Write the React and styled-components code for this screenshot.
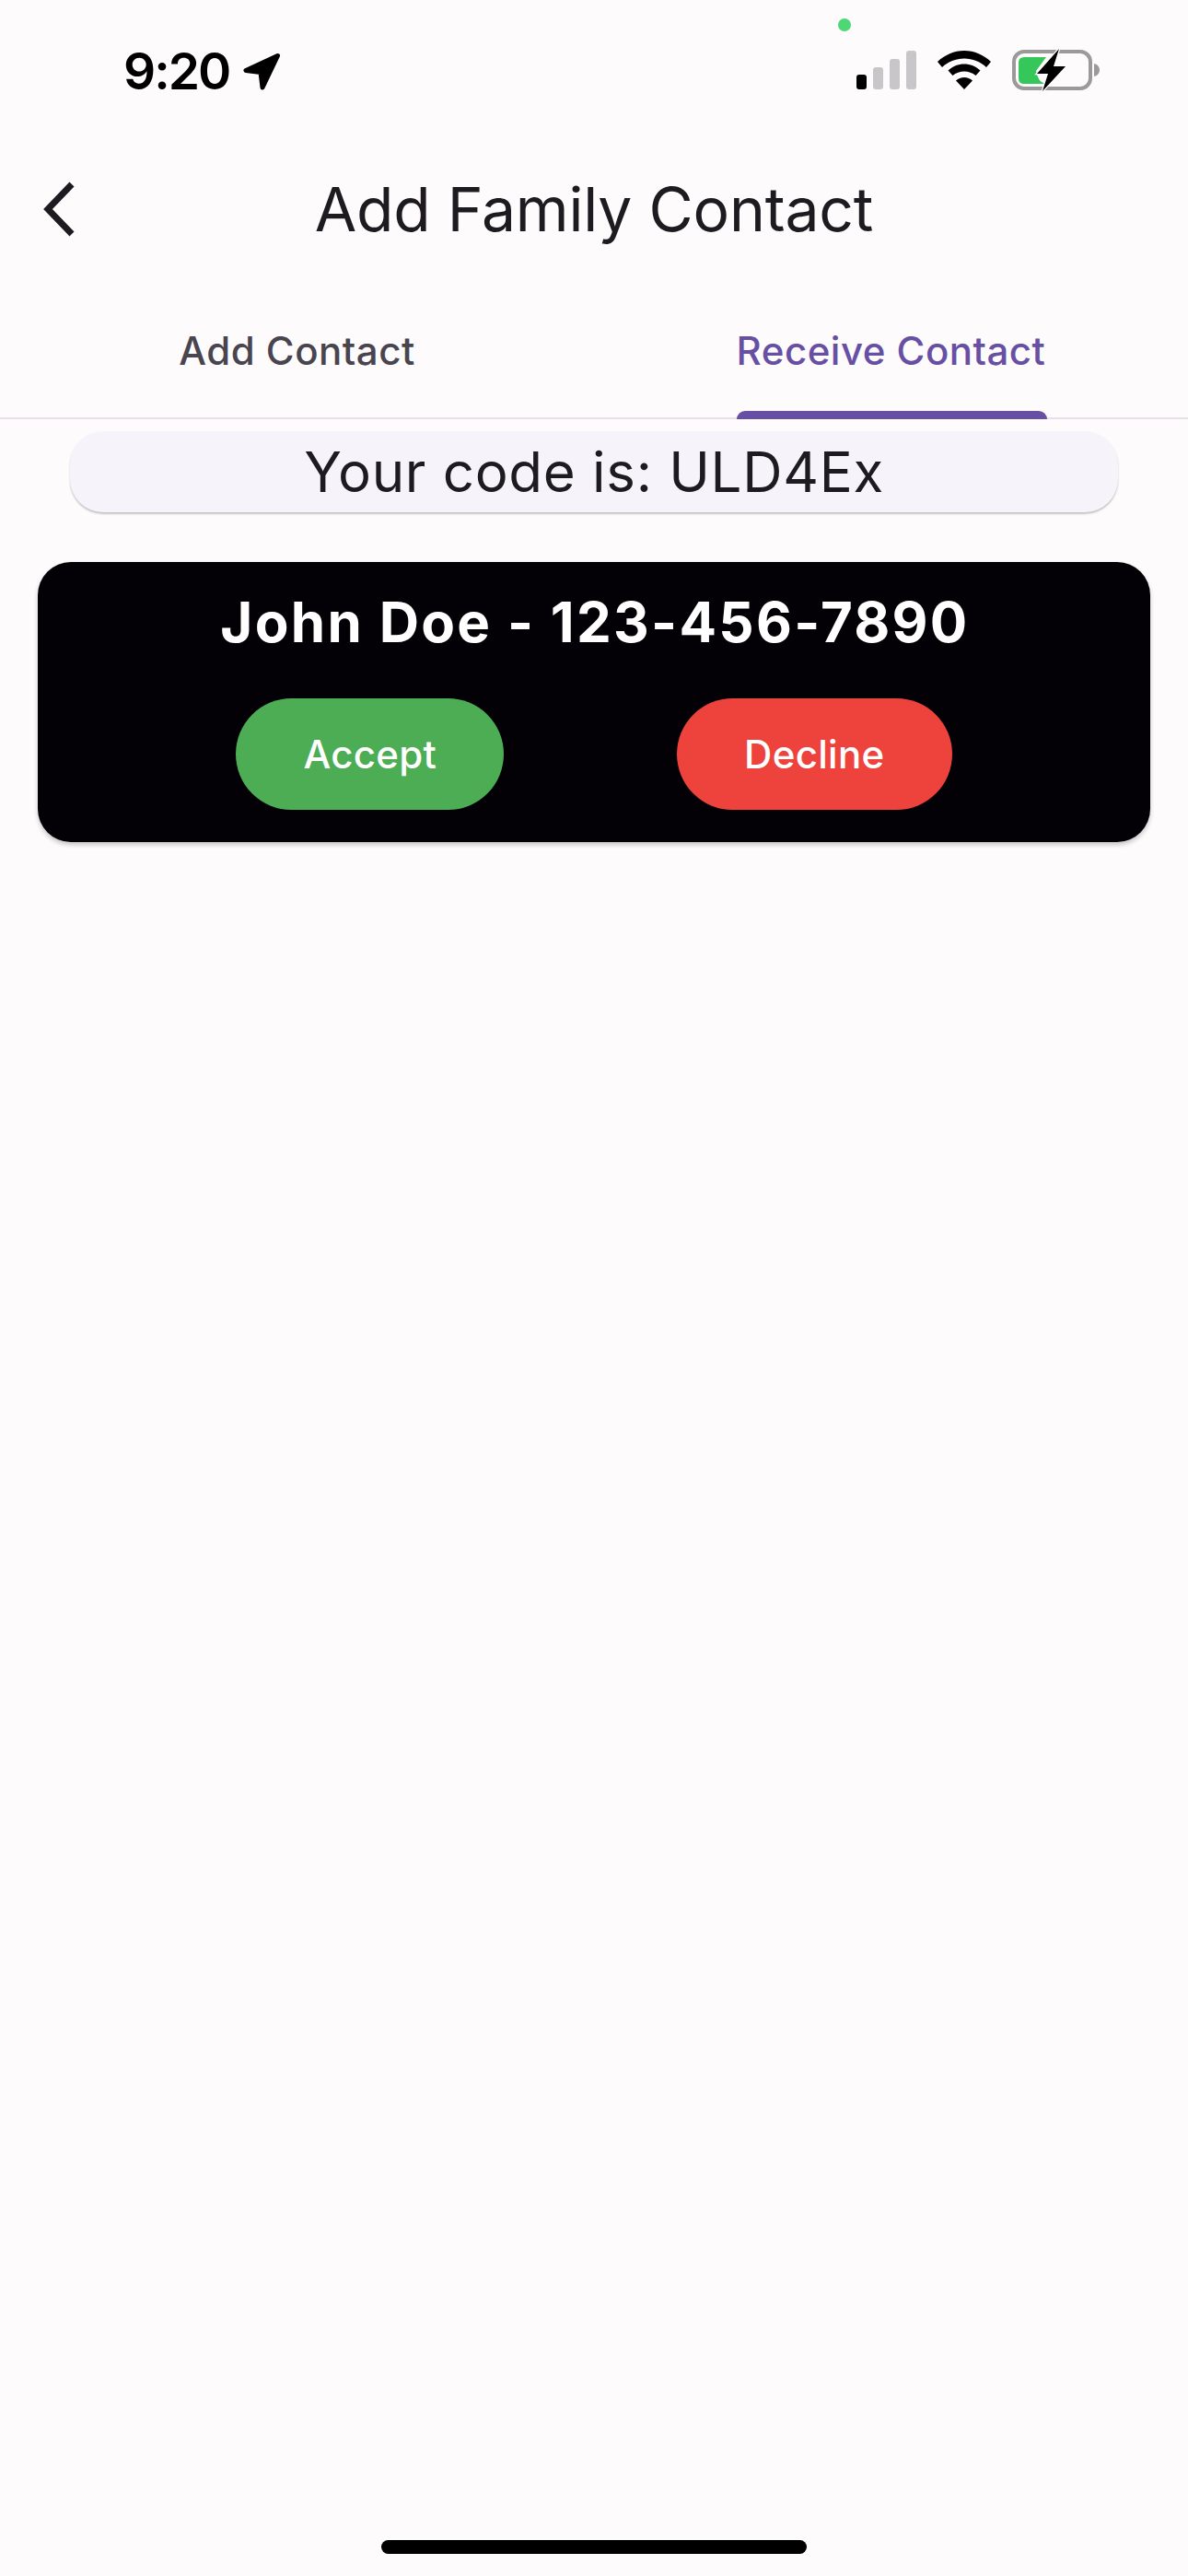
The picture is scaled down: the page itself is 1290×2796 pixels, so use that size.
import React from "react";
import styled, { createGlobalStyle } from "styled-components";

const Global = createGlobalStyle`
  html, body { margin: 0; padding: 0; background: #fefbfc; }
  * { box-sizing: border-box; }
`;

const Page = styled.div`
  width: 1290px;
  height: 2796px;
  display: flex;
  flex-direction: column;
  position: relative;
  overflow: hidden;
  background: #fefbfc;
  font-family: Inter, "Liberation Sans", sans-serif;
  color: #1d1b20;
`;

const StatusBar = styled.div`
  height: 154px;
  flex: none;
  display: flex;
  align-items: center;
  justify-content: space-between;
  padding: 0 95px 0 134px;
`;

const StatusGroup = styled.div`
  display: flex;
  align-items: center;
  gap: ${(p) => p.$gap}px;
  margin-top: ${(p) => p.$lift || 0}px;
`;

const Time = styled.span`
  font-size: 55px;
  font-weight: 600;
  line-height: 1;
  color: #000;
  letter-spacing: -2px;
`;

const CameraDot = styled.span`
  position: absolute;
  left: 910px;
  top: 20px;
  width: 14px;
  height: 14px;
  border-radius: 50%;
  background: #4fd675;
`;

const AppBar = styled.header`
  height: 146px;
  flex: none;
  display: grid;
  grid-template-columns: 1fr auto 1fr;
  align-items: center;
`;

const BackButton = styled.button`
  justify-self: start;
  margin-left: 44px;
  padding: 0;
  border: 0;
  background: none;
  display: flex;
  color: #1d1b20;
`;

const Title = styled.h1`
  margin: 0;
  font-size: 66px;
  font-weight: 400;
  line-height: 1;
  letter-spacing: -0.2px;
`;

const Tabs = styled.nav`
  height: 155px;
  flex: none;
  display: flex;
  border-bottom: 2px solid #e6e0e9;
`;

const Tab = styled.div`
  flex: 1;
  position: relative;
  display: flex;
  justify-content: center;
  align-items: center;
  padding-top: 7px;
  font-size: 42px;
  font-weight: 500;
  letter-spacing: 0.5px;
  color: ${(p) => (p.$active ? "#6750a4" : "#49454f")};
`;

const TabIndicator = styled.span`
  position: absolute;
  left: 155px;
  width: 337px;
  bottom: -2px;
  height: 9px;
  border-radius: 9px 9px 0 0;
  background: #6750a4;
`;

const CodePill = styled.div`
  height: 88px;
  margin: 13px 76px 0;
  flex: none;
  display: flex;
  align-items: center;
  justify-content: center;
  border-radius: 36px;
  background: #f6f3fa;
  box-shadow: 0 2px 2px rgba(0, 0, 0, 0.22);
  font-size: 60px;
  letter-spacing: 0.7px;
`;

const RequestCard = styled.section`
  height: 304px;
  margin: 54px 41px 0;
  flex: none;
  display: flex;
  flex-direction: column;
  align-items: center;
  padding-top: 29px;
  border-radius: 36px;
  background: #030105;
  box-shadow: 0 3px 5px rgba(0, 0, 0, 0.22);
`;

const ContactName = styled.div`
  padding-left: 2px;
  font-size: 60px;
  font-weight: 700;
  line-height: 72px;
  color: #fff;
  letter-spacing: 2.3px;
`;

const Actions = styled.div`
  display: flex;
  justify-content: center;
  gap: 188px;
  margin-top: 47px;
`;

const ActionButton = styled.button`
  height: 121px;
  padding: 0 73px;
  border: 0;
  border-radius: 61px;
  background: ${(p) => p.$color};
  color: #fff;
  font-family: inherit;
  font-size: 42px;
  font-weight: 500;
  letter-spacing: 0.3px;
`;

const HomeIndicator = styled.div`
  width: 462px;
  height: 15px;
  margin: auto auto 24px;
  flex: none;
  border-radius: 8px;
  background: #000;
`;

const LocationArrow = () => (
  <svg width="41" height="41" viewBox="0 0 41 41">
    <path d="M37.500 3.500 L3 19.500 L19 21.500 L21 38 Z" fill="#000" stroke="#000" strokeWidth="5" strokeLinejoin="round" />
  </svg>
);

const Signal = () => (
  <svg width="65" height="42" viewBox="0 0 65 42">
    <rect x="0" y="26" width="11" height="16" rx="3" fill="#000" />
    <rect x="18" y="18" width="11" height="24" rx="3" fill="#c8c6c8" />
    <rect x="36" y="9" width="11" height="33" rx="3" fill="#c8c6c8" />
    <rect x="54" y="0" width="11" height="42" rx="3" fill="#c8c6c8" />
  </svg>
);

const Wifi = () => (
  <svg width="58" height="42" viewBox="0 0 58 42">
    <path d="M29 0 C18 0 8 4.500 0 12 L5 18 C11.500 12 20 8.500 29 8.500 C38 8.500 46.500 12 53 18 L58 12 C50 4.500 40 0 29 0 Z" fill="#000" />
    <path d="M29 14.500 C22.500 14.500 16.500 17 11.500 21.500 L16.500 27 C20 24 24.500 22.500 29 22.500 C33.500 22.500 38 24 41.500 27 L46.500 21.500 C41.500 17 35.500 14.500 29 14.500 Z" fill="#000" />
    <path d="M29 29 C25.500 29 22.500 30.200 20 32.500 L29 42 L38 32.500 C35.500 30.200 32.500 29 29 29 Z" fill="#000" />
  </svg>
);

const Battery = () => (
  <svg width="96" height="46" viewBox="0 0 96 46">
    <rect x="2" y="3" width="83" height="40" rx="11" fill="none" stroke="#9b9a9b" strokeWidth="4" />
    <path d="M89 16 C93 17 95 20 95 23 C95 26 93 29 89 30 Z" fill="#9b9a9b" />
    <path d="M7 15 Q7 9 13 9 L37 9 L26 24 Q28 36 36 38 L13 38 Q7 38 7 32 Z" fill="#35c759" />
    <path d="M51 0 L27 27 L39 27 L33 46 L58 19 L45 19 Z" fill="#000" stroke="#fefbfc" strokeWidth="2.500" paintOrder="stroke" />
  </svg>
);

const BackChevron = () => (
  <svg width="40" height="64" viewBox="0 0 40 64">
    <path d="M34 5 L8 32 L34 59" fill="none" stroke="currentColor" strokeWidth="7" />
  </svg>
);

export default function App() {
  return (
    <Page>
      <Global />
      <CameraDot />
      <StatusBar>
        <StatusGroup $gap={15}>
          <Time>9:20</Time>
          <LocationArrow />
        </StatusGroup>
        <StatusGroup $gap={23} $lift={-2}>
          <Signal />
          <Wifi />
          <Battery />
        </StatusGroup>
      </StatusBar>
      <AppBar>
        <BackButton aria-label="Back">
          <BackChevron />
        </BackButton>
        <Title>Add Family Contact</Title>
      </AppBar>
      <Tabs>
        <Tab>Add Contact</Tab>
        <Tab $active>
          Receive Contact
          <TabIndicator />
        </Tab>
      </Tabs>
      <CodePill>Your code is: ULD4Ex</CodePill>
      <RequestCard>
        <ContactName>John Doe - 123-456-7890</ContactName>
        <Actions>
          <ActionButton $color="#4cad55">Accept</ActionButton>
          <ActionButton $color="#ee423d">Decline</ActionButton>
        </Actions>
      </RequestCard>
      <HomeIndicator />
    </Page>
  );
}
